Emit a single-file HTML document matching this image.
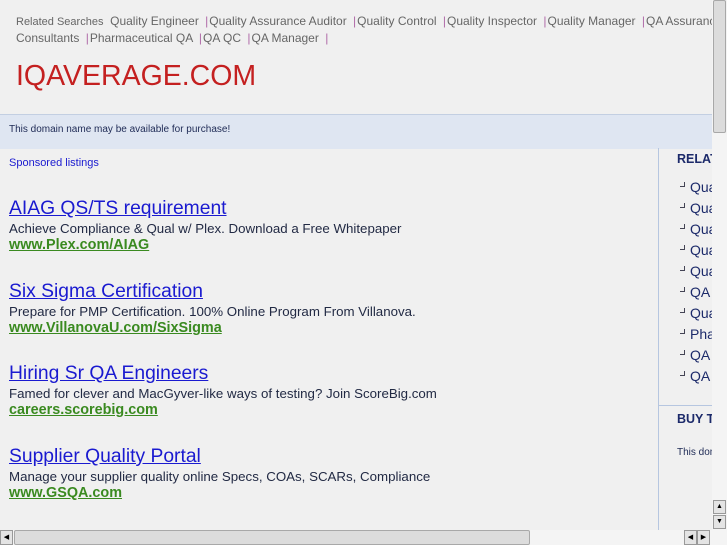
<!DOCTYPE html><html><head><style>
body{margin:0;width:727px;height:545px;overflow:hidden;background:#f0f0f0;font-family:"Liberation Sans",sans-serif;position:relative}
.a{position:absolute;white-space:nowrap}
.rs{left:16px;font-size:12px;color:#666}
.rs .s{color:#b06aa8;margin:0 1px 0 3px}
.ad{left:9px}
.t{font-size:19.3px;color:#1a1ad0;text-decoration:underline;line-height:22px}
.d{font-size:13.3px;color:#222a44;line-height:17px}
.u{font-size:14.4px;color:#3a8a20;font-weight:bold;text-decoration:underline;line-height:17px}
.ri{left:680px;font-size:14px;color:#1c2a6a}
.ri:before{content:"";display:inline-block;width:4px;height:4px;border-right:1px solid #445;border-bottom:1px solid #445;margin-right:5px;vertical-align:5px}
</style></head><body>
<div class="a rs" style="top:14px"><span style="font-size:11px">Related Searches</span> &nbsp;Quality Engineer <span class="s">|</span>Quality Assurance Auditor <span class="s">|</span>Quality Control <span class="s">|</span>Quality Inspector <span class="s">|</span>Quality Manager <span class="s">|</span>QA Assurance</div>
<div class="a rs" style="top:31px">Consultants <span class="s">|</span>Pharmaceutical QA <span class="s">|</span>QA QC <span class="s">|</span>QA Manager <span class="s">|</span></div>
<div class="a" style="left:16px;top:60px;font-size:28.5px;color:#c42020">IQAVERAGE.COM</div>
<div class="a" style="left:0;top:114px;width:712px;height:34px;background:#dfe6f2;border-top:1px solid #c3cfe2"></div>
<div class="a" style="left:9px;top:124px;font-size:10px;color:#1e2a55">This domain name may be available for purchase!</div>
<div class="a" style="left:9px;top:157px;font-size:11px;color:#1a1ad0">Sponsored listings</div>
<div class="a" style="left:658px;top:148px;width:1px;height:382px;background:#b6c6e0"></div>
<div class="a" style="left:658px;top:405px;width:54px;height:1px;background:#b6c6e0"></div>
<div class="a" style="left:677px;top:152px;font-size:12.5px;font-weight:bold;color:#1c2a6a">RELATED</div>
<div class="a ri" style="top:179px">Quality</div><div class="a ri" style="top:200px">Quality</div><div class="a ri" style="top:221px">Quality</div><div class="a ri" style="top:242px">Quality</div><div class="a ri" style="top:263px">Quality</div><div class="a ri" style="top:284px">QA</div><div class="a ri" style="top:305px">Quality</div><div class="a ri" style="top:326px">Pharma</div><div class="a ri" style="top:347px">QA</div><div class="a ri" style="top:368px">QA</div>
<div class="a" style="left:677px;top:412px;font-size:12.5px;font-weight:bold;color:#1c2a6a">BUY THIS</div>
<div class="a" style="left:677px;top:447px;font-size:10px;color:#1e2a55">This domain</div>
<div class="a ad" style="top:198px"><div class="t">AIAG QS/TS requirement</div><div class="d">Achieve Compliance &amp; Qual w/ Plex. Download a Free Whitepaper</div><div class="u">www.Plex.com/AIAG</div></div>
<div class="a ad" style="top:281px"><div class="t">Six Sigma Certification</div><div class="d">Prepare for PMP Certification. 100% Online Program From Villanova.</div><div class="u">www.VillanovaU.com/SixSigma</div></div>
<div class="a ad" style="top:363px"><div class="t">Hiring Sr QA Engineers</div><div class="d">Famed for clever and MacGyver-like ways of testing? Join ScoreBig.com</div><div class="u">careers.scorebig.com</div></div>
<div class="a ad" style="top:446px"><div class="t">Supplier Quality Portal</div><div class="d">Manage your supplier quality online Specs, COAs, SCARs, Compliance</div><div class="u">www.GSQA.com</div></div>
<div class="a" style="left:712px;top:0;width:15px;height:530px;background:#f4f4f4"></div>
<div class="a" style="left:713px;top:0;width:13px;height:133px;background:#dcdcdc;border:1px solid #a8a8a8;border-radius:2px;box-sizing:border-box"></div>
<div class="a" style="left:713px;top:500px;width:13px;height:14px;background:#e4e4e4;border:1px solid #999;box-sizing:border-box;font-size:7px;text-align:center;line-height:12px">▲</div>
<div class="a" style="left:713px;top:515px;width:13px;height:14px;background:#e4e4e4;border:1px solid #999;box-sizing:border-box;font-size:7px;text-align:center;line-height:12px">▼</div>
<div class="a" style="left:0;top:530px;width:727px;height:15px;background:#f4f4f4"></div>
<div class="a" style="left:0;top:530px;width:13px;height:15px;background:#e4e4e4;border:1px solid #999;box-sizing:border-box;font-size:7px;text-align:center;line-height:13px">◀</div>
<div class="a" style="left:14px;top:530px;width:516px;height:15px;background:#dcdcdc;border:1px solid #a8a8a8;border-radius:2px;box-sizing:border-box"></div>
<div class="a" style="left:684px;top:530px;width:13px;height:15px;background:#e4e4e4;border:1px solid #999;box-sizing:border-box;font-size:7px;text-align:center;line-height:13px">◀</div>
<div class="a" style="left:697px;top:530px;width:13px;height:15px;background:#e4e4e4;border:1px solid #999;box-sizing:border-box;font-size:7px;text-align:center;line-height:13px">▶</div>
</body></html>
